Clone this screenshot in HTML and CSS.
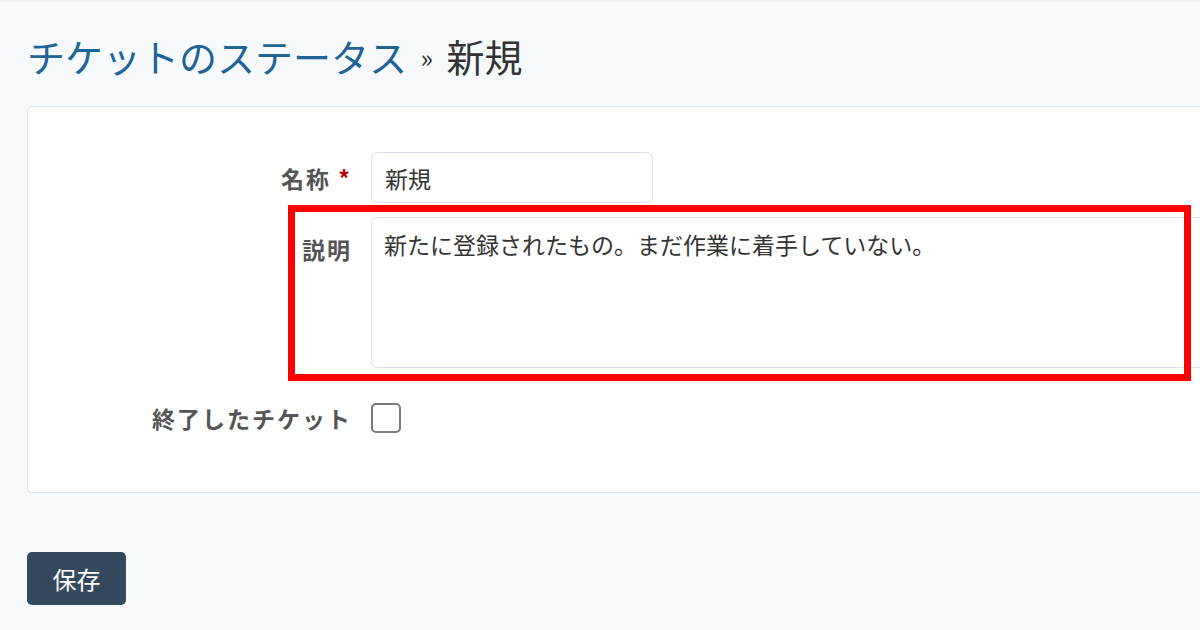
FILE: index.html
```html
<!DOCTYPE html>
<html lang="ja">
<head>
    <meta charset="UTF-8">
    <title>チケットのステータス » 新規</title>
    <link rel="stylesheet" href="styles.css">
</head>
<body>
    <h2 class="page-title"><a href="#" class="crumb">チケットのステータス</a> <span class="sep">»</span> 新規</h2>

    <form class="status-form">
        <div class="box">
            <div class="field">
                <label class="field-label" for="name">名称 <span class="required">*</span></label>
                <input type="text" id="name" class="text-input" value="新規">
            </div>
            <div class="field field-top">
                <label class="field-label" for="desc">説明</label>
                <textarea id="desc" class="text-area">新たに登録されたもの。まだ作業に着手していない。</textarea>
            </div>
            <div class="field field-check">
                <label class="field-label" for="closed">終了したチケット</label>
                <span class="check"><input type="checkbox" id="closed"></span>
            </div>

            <!-- 注目枠 -->
            <div class="highlight"></div>
        </div>

        <div class="actions">
            <button type="submit" class="save">保存</button>
        </div>
    </form>
</body>
</html>
```

FILE: styles.css
```css
html, body {
    overflow: hidden;
}
body {
    margin: 0;
    padding: 0 0 0 27px;
    height: 630px;
    box-sizing: border-box;
    background: #f6fafd;
    border-top: 2px solid #eceff2;
    font-family: "Noto Sans CJK JP", "Noto Sans", sans-serif;
    color: #333;
}
.page-title {
    margin: 0;
    padding-top: 30px;
    height: 104px;
    box-sizing: border-box;
    font-size: 38px;
    font-weight: normal;
    line-height: 48px;
    color: #333;
    white-space: nowrap;
}
.crumb {
    color: #1f6397;
    text-decoration: none;
}
.sep {
    font-size: 26px;
    vertical-align: 4px;
    margin: 0 5px;
}
.status-form {
    width: 1300px;
}
.box {
    position: relative;
    background: #fff;
    border: 1.5px solid #dfe6ee;
    border-radius: 5px;
    padding: 45px 0 48px;
}
.field {
    display: grid;
    grid-template-columns: 324px 1fr;
    column-gap: 19px;
    align-items: center;
}
.field-top {
    align-items: start;
    margin-top: 14px;
}
.field-check {
    margin-top: 24px;
    height: 52px;
}
.field-label {
    text-align: right;
    font-size: 23px;
    font-weight: bold;
    color: #555;
    letter-spacing: 2px;
}
.field-top .field-label {
    padding-top: 15px;
}
.required {
    color: #bb0000;
}
.text-input {
    width: 282px;
    height: 51px;
    box-sizing: border-box;
    border: 1.5px solid #dae3ee;
    border-radius: 6px;
    padding: 0 13px;
    font-family: inherit;
    font-size: 23px;
    color: #333;
    background: #fff;
}
.text-area {
    width: 900px;
    height: 151px;
    box-sizing: border-box;
    border: 1.5px solid #dae3ee;
    border-radius: 6px;
    padding: 9px 12px;
    font-family: inherit;
    font-size: 23px;
    line-height: 34px;
    color: #333;
    resize: none;
    display: block;
}
.check input {
    appearance: none;
    -webkit-appearance: none;
    display: block;
    margin: 0;
    width: 30px;
    height: 30px;
    box-sizing: border-box;
    border: 2px solid #7a7a7a;
    border-radius: 5px;
    background: #fff;
}
.highlight {
    position: absolute;
    left: 260px;
    top: 98px;
    width: 903px;
    height: 176px;
    box-sizing: border-box;
    border: 7.5px solid #ff0000;
}
.actions {
    padding-top: 59px;
}
.save {
    width: 99px;
    height: 53px;
    border: none;
    border-radius: 5px;
    background: #34495e;
    color: #fff;
    font-family: inherit;
    font-size: 24px;
    cursor: pointer;
}
```
